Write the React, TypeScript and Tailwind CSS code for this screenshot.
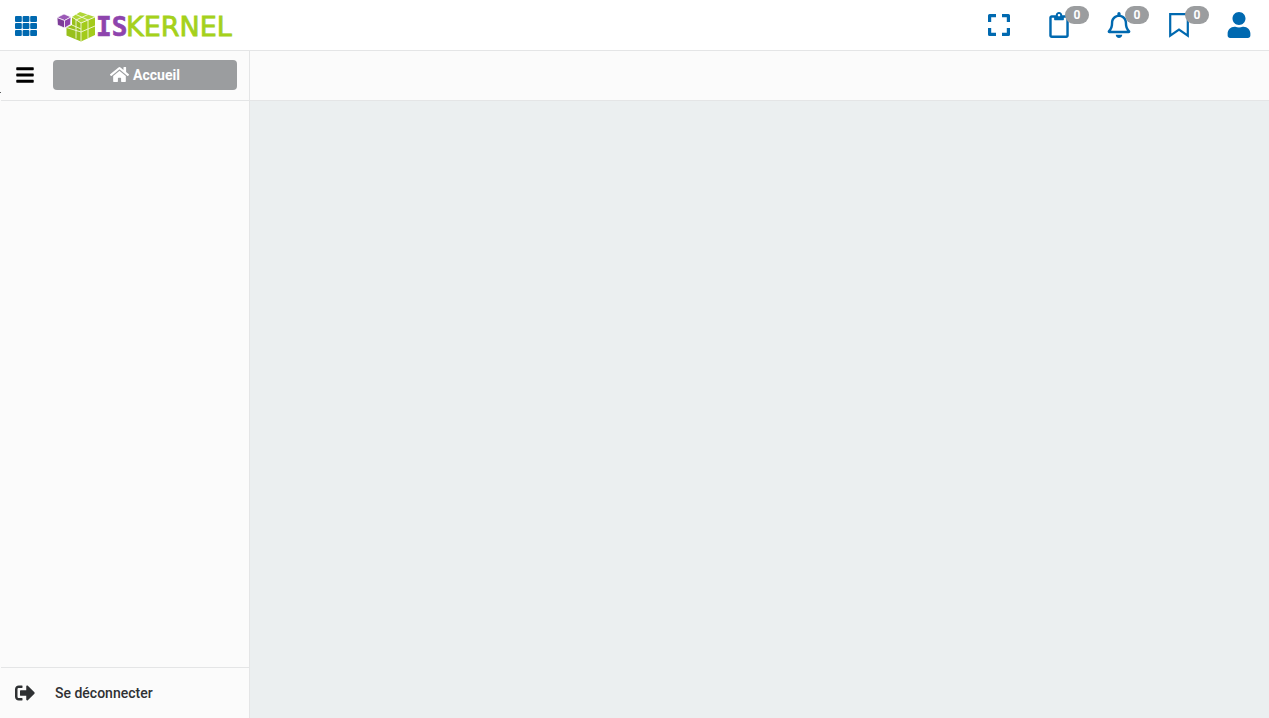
import type { ReactNode } from 'react'
import { FaBars, FaHome, FaRegBell, FaRegClipboard, FaSignOutAlt, FaUser } from 'react-icons/fa'

function GridIcon() {
  const columns = [0, 7.6, 15.2]
  const rows = [0, 7, 14]
  return (
    <svg width="22" height="20" viewBox="0 0 22 20" fill="currentColor" aria-hidden="true">
      {columns.map((x) =>
        rows.map((y) => <rect key={`${x}-${y}`} x={x} y={y} width="6.8" height="6" rx="1" />)
      )}
    </svg>
  )
}

function ExpandIcon() {
  return (
    <svg width="22" height="22" viewBox="0 0 22 22" fill="none" stroke="currentColor" strokeWidth="3.2" strokeLinejoin="round" aria-hidden="true">
      <path d="M1.6 8V1.6H8M14 1.6H20.4V8M20.4 14V20.4H14M8 20.4H1.6V14" />
    </svg>
  )
}

function BookmarkIcon() {
  return (
    <svg width="20" height="25" viewBox="0 0 20 25" fill="none" stroke="currentColor" strokeWidth="2.2" aria-hidden="true">
      <path d="M1.2 1.1H18.8V22.6L10 16.6L1.2 22.6Z" />
    </svg>
  )
}

function Logo() {
  return (
    <svg width="182" height="34" viewBox="0 0 182 34" role="img" aria-label="ISKERNEL">
      {/* small purple cube */}
      <g stroke="#fff" strokeWidth="0.7" strokeLinejoin="round">
        <path d="M1 8.5L8 5L15 8L8.5 11.5Z" fill="#9b59b6" />
        <path d="M1 8.5L8.5 11.5V19L1.5 16Z" fill="#7d3c98" />
        <path d="M15 8L8.5 11.5V19L14.5 15.5Z" fill="#8e44ad" />
      </g>
      {/* green cube made of blocks */}
      <path d="M16 8L24 3L39 8L25 14Z" fill="#b0d636" />
      <path d="M39 8V26L25 32.5V14Z" fill="#a3cb1b" />
      <path d="M16 8L25 14V32.5L10.5 26.5V18.5L16 16Z" fill="#98c01c" />
      <path
        d="M16 8L25 14L39 8M25 14V32.5M20 5.5L32 11V29M32 5.5L20 11V29.5M39 17L25 23L10.5 18.5M16 16L25 20"
        fill="none"
        stroke="#f4f8df"
        strokeWidth="0.9"
        strokeLinejoin="round"
      />
      <text x="40" y="27" fill="#8e44ad" stroke="#8e44ad" strokeWidth="0.6" fontFamily="DejaVu Sans Mono" fontWeight="700" fontSize="26">IS</text>
      <text x="70" y="27" fill="#a5d11b" stroke="#a5d11b" strokeWidth="0.8" fontFamily="DejaVu Sans" fontSize="27">KERNEL</text>
    </svg>
  )
}

function CounterButton({ label, count, children }: { label: string; count: number; children: ReactNode }) {
  return (
    <button type="button" aria-label={label} className="relative flex h-[50px] w-[60px] items-center justify-center">
      {children}
      <span className="absolute top-1.5 right-0 h-[18px] w-6 rounded-full bg-[#9b9d9f] text-center text-xs leading-[18px] font-bold text-white">
        {count}
      </span>
    </button>
  )
}

export default function App() {
  return (
    <div className="flex min-h-screen flex-col bg-[#ebeff0] font-['Roboto',sans-serif] text-sm text-[#2f3133]">
      <header className="flex h-[51px] items-center justify-between border-b border-[#e4e5e6] bg-white text-[#0069b0]">
        <div className="flex items-center pt-0.5">
          <button type="button" aria-label="Applications" className="px-[15px]">
            <GridIcon />
          </button>
          <a href="#" className="ml-1">
            <Logo />
          </a>
        </div>
        <div className="flex items-center">
          <button type="button" aria-label="Plein écran" className="flex h-[50px] w-[60px] items-center justify-center">
            <ExpandIcon />
          </button>
          <CounterButton label="Presse-papiers" count={0}>
            <FaRegClipboard size={26} />
          </CounterButton>
          <CounterButton label="Notifications" count={0}>
            <FaRegBell size={26} />
          </CounterButton>
          <CounterButton label="Favoris" count={0}>
            <BookmarkIcon />
          </CounterButton>
          <button type="button" aria-label="Profil" className="flex h-[50px] w-[60px] items-center justify-center">
            <FaUser size={26} />
          </button>
        </div>
      </header>

      <div className="flex flex-1">
        <aside className="relative flex w-[250px] flex-col border-r border-[#e4e5e6] bg-[#fbfbfb] pl-px">
          <span className="absolute top-[41px] left-0 h-px w-px bg-[#5b5d5f]" />
          <div className="flex h-[50px] items-center border-b border-[#e4e5e6] pr-3 pb-0.5">
            <button type="button" aria-label="Menu" className="px-3.5 text-black">
              <FaBars size={20} />
            </button>
            <button
              type="button"
              className="ml-1 flex h-[30px] flex-1 items-center justify-center gap-1 rounded bg-[#9b9d9f] font-bold text-white"
            >
              <FaHome size={19} />
              Accueil
            </button>
          </div>
          <nav className="flex-1" />
          <a href="#" className="flex h-[51px] items-center gap-5 border-t border-[#e4e5e6] px-3.5 font-medium">
            <FaSignOutAlt size={20} />
            Se déconnecter
          </a>
        </aside>
        <main className="flex flex-1 flex-col">
          <div className="h-[50px] border-b border-[#e4e5e6] bg-[#fbfbfb]" />
        </main>
      </div>
    </div>
  )
}
